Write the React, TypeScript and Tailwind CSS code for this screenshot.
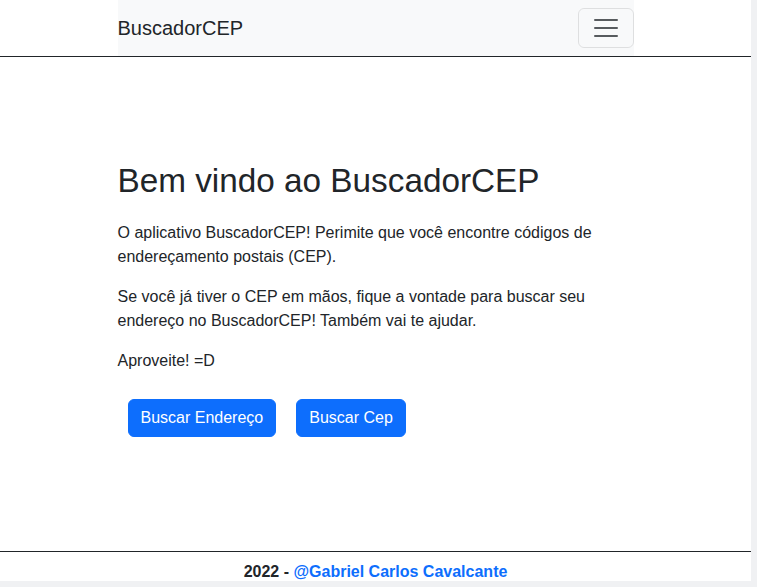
import React from 'react';

const App: React.FC = () => {
    const buttonStyles = "m-[10px] px-3 py-[6px] rounded-md bg-[#0d6efd] text-white text-base leading-6 border border-[#0d6efd]";

    return (
        <div className="grid grid-cols-[751px_6px] grid-rows-[581px_6px] w-[757px] h-[587px] overflow-hidden bg-[#f0f1f3] font-['Liberation_Sans',Arial,sans-serif] text-[#212529]">
            <div className="bg-white overflow-hidden flex flex-col">
                <nav className="border-b border-[#212529]">
                    <div className="w-[516px] mx-auto bg-[#f8f9fa] py-2 flex items-center justify-between">
                        <span className="text-xl leading-[30px]">BuscadorCEP</span>
                        <button className="w-14 h-10 border border-black/10 rounded-md flex items-center justify-center">
                            <svg width="30" height="30" viewBox="0 0 30 30">
                                <path d="M4 7h22M4 15h22M4 23h22" stroke="rgba(33,37,41,0.75)" strokeWidth="2" strokeLinecap="round" />
                            </svg>
                        </button>
                    </div>
                </nav>

                <main className="flex-grow">
                    <div className="w-[516px] mx-auto pt-[104px]">
                        <h1 className="text-[33.3px] leading-[40px] mb-5">Bem vindo ao BuscadorCEP</h1>
                        <p className="text-base leading-6 mb-4">O aplicativo BuscadorCEP! Perimite que você encontre códigos de endereçamento postais (CEP).</p>
                        <p className="text-base leading-6 mb-4">Se você já tiver o CEP em mãos, fique a vontade para buscar seu endereço no BuscadorCEP! Também vai te ajudar.</p>
                        <p className="text-base leading-6 mb-4">Aproveite! =D</p>
                        <div className="flex">
                            <button className={buttonStyles}>Buscar Endereço</button>
                            <button className={buttonStyles}>Buscar Cep</button>
                        </div>
                    </div>
                </main>

                <footer className="border-t border-[#212529] pt-2 h-[30px] shrink-0 text-center font-bold text-base leading-6">
                    2022 - <a href="#" className="text-[#0d6efd]">@Gabriel Carlos Cavalcante</a>
                </footer>
            </div>
            <div className="bg-[#f0f1f3]"></div>
            <div className="bg-[#f0f1f3]"></div>
            <div className="bg-[#f0f1f3]"></div>
        </div>
    );
};

export default App;
